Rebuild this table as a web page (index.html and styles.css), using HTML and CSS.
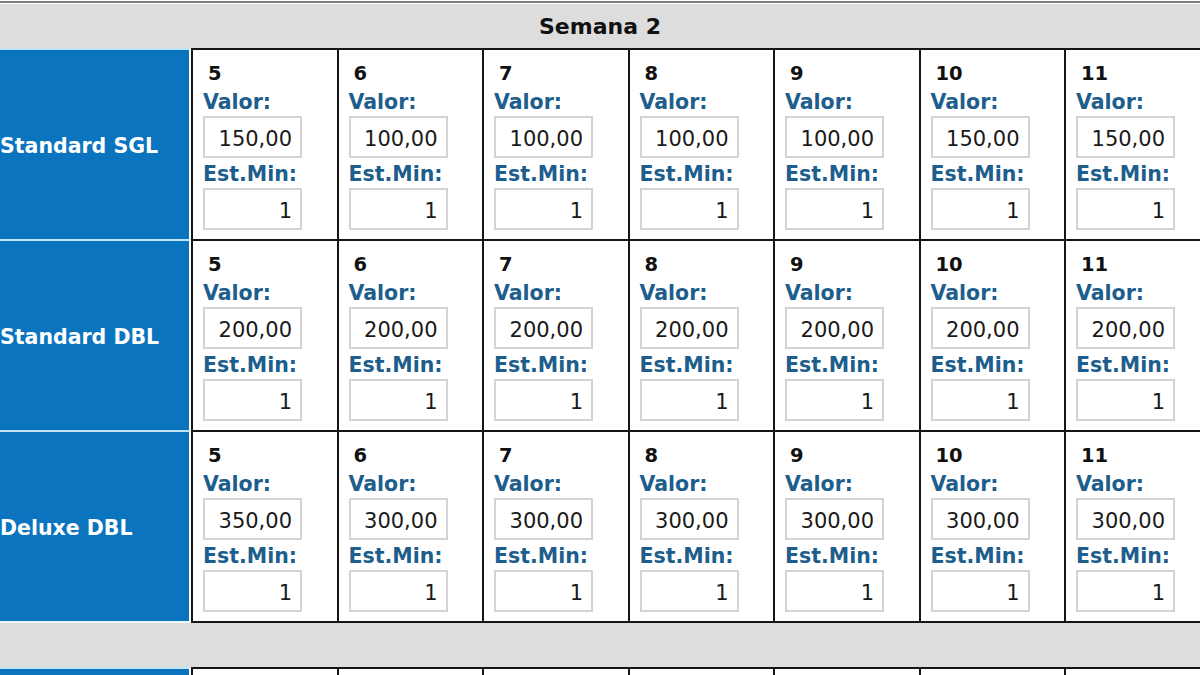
FILE: index.html
```html
<!DOCTYPE html>
<html lang="pt">
<head>
<meta charset="utf-8">
<title>Tarifas - Semana 2</title>
<link rel="stylesheet" href="styles.css">
</head>
<body>
<div class="page">
  <div class="week-header">Semana 2</div>

  <div class="room-row">
    <div class="room-name">Standard SGL</div>
    <div class="day"><div class="day-num">5</div><div class="field-label">Valor:</div><input class="field-input" type="text" value="150,00" readonly><div class="field-label field-label--second">Est.Min:</div><input class="field-input" type="text" value="1" readonly></div>
    <div class="day"><div class="day-num">6</div><div class="field-label">Valor:</div><input class="field-input" type="text" value="100,00" readonly><div class="field-label field-label--second">Est.Min:</div><input class="field-input" type="text" value="1" readonly></div>
    <div class="day"><div class="day-num">7</div><div class="field-label">Valor:</div><input class="field-input" type="text" value="100,00" readonly><div class="field-label field-label--second">Est.Min:</div><input class="field-input" type="text" value="1" readonly></div>
    <div class="day"><div class="day-num">8</div><div class="field-label">Valor:</div><input class="field-input" type="text" value="100,00" readonly><div class="field-label field-label--second">Est.Min:</div><input class="field-input" type="text" value="1" readonly></div>
    <div class="day"><div class="day-num">9</div><div class="field-label">Valor:</div><input class="field-input" type="text" value="100,00" readonly><div class="field-label field-label--second">Est.Min:</div><input class="field-input" type="text" value="1" readonly></div>
    <div class="day"><div class="day-num">10</div><div class="field-label">Valor:</div><input class="field-input" type="text" value="150,00" readonly><div class="field-label field-label--second">Est.Min:</div><input class="field-input" type="text" value="1" readonly></div>
    <div class="day"><div class="day-num">11</div><div class="field-label">Valor:</div><input class="field-input" type="text" value="150,00" readonly><div class="field-label field-label--second">Est.Min:</div><input class="field-input" type="text" value="1" readonly></div>
  </div>

  <div class="room-row">
    <div class="room-name">Standard DBL</div>
    <div class="day"><div class="day-num">5</div><div class="field-label">Valor:</div><input class="field-input" type="text" value="200,00" readonly><div class="field-label field-label--second">Est.Min:</div><input class="field-input" type="text" value="1" readonly></div>
    <div class="day"><div class="day-num">6</div><div class="field-label">Valor:</div><input class="field-input" type="text" value="200,00" readonly><div class="field-label field-label--second">Est.Min:</div><input class="field-input" type="text" value="1" readonly></div>
    <div class="day"><div class="day-num">7</div><div class="field-label">Valor:</div><input class="field-input" type="text" value="200,00" readonly><div class="field-label field-label--second">Est.Min:</div><input class="field-input" type="text" value="1" readonly></div>
    <div class="day"><div class="day-num">8</div><div class="field-label">Valor:</div><input class="field-input" type="text" value="200,00" readonly><div class="field-label field-label--second">Est.Min:</div><input class="field-input" type="text" value="1" readonly></div>
    <div class="day"><div class="day-num">9</div><div class="field-label">Valor:</div><input class="field-input" type="text" value="200,00" readonly><div class="field-label field-label--second">Est.Min:</div><input class="field-input" type="text" value="1" readonly></div>
    <div class="day"><div class="day-num">10</div><div class="field-label">Valor:</div><input class="field-input" type="text" value="200,00" readonly><div class="field-label field-label--second">Est.Min:</div><input class="field-input" type="text" value="1" readonly></div>
    <div class="day"><div class="day-num">11</div><div class="field-label">Valor:</div><input class="field-input" type="text" value="200,00" readonly><div class="field-label field-label--second">Est.Min:</div><input class="field-input" type="text" value="1" readonly></div>
  </div>

  <div class="room-row room-row--last">
    <div class="room-name">Deluxe DBL</div>
    <div class="day"><div class="day-num">5</div><div class="field-label">Valor:</div><input class="field-input" type="text" value="350,00" readonly><div class="field-label field-label--second">Est.Min:</div><input class="field-input" type="text" value="1" readonly></div>
    <div class="day"><div class="day-num">6</div><div class="field-label">Valor:</div><input class="field-input" type="text" value="300,00" readonly><div class="field-label field-label--second">Est.Min:</div><input class="field-input" type="text" value="1" readonly></div>
    <div class="day"><div class="day-num">7</div><div class="field-label">Valor:</div><input class="field-input" type="text" value="300,00" readonly><div class="field-label field-label--second">Est.Min:</div><input class="field-input" type="text" value="1" readonly></div>
    <div class="day"><div class="day-num">8</div><div class="field-label">Valor:</div><input class="field-input" type="text" value="300,00" readonly><div class="field-label field-label--second">Est.Min:</div><input class="field-input" type="text" value="1" readonly></div>
    <div class="day"><div class="day-num">9</div><div class="field-label">Valor:</div><input class="field-input" type="text" value="300,00" readonly><div class="field-label field-label--second">Est.Min:</div><input class="field-input" type="text" value="1" readonly></div>
    <div class="day"><div class="day-num">10</div><div class="field-label">Valor:</div><input class="field-input" type="text" value="300,00" readonly><div class="field-label field-label--second">Est.Min:</div><input class="field-input" type="text" value="1" readonly></div>
    <div class="day"><div class="day-num">11</div><div class="field-label">Valor:</div><input class="field-input" type="text" value="300,00" readonly><div class="field-label field-label--second">Est.Min:</div><input class="field-input" type="text" value="1" readonly></div>
  </div>

  <div class="week-spacer"></div>

  <div class="room-row room-row--stub">
    <div class="room-name"></div>
    <div class="day"></div>
    <div class="day"></div>
    <div class="day"></div>
    <div class="day"></div>
    <div class="day"></div>
    <div class="day"></div>
    <div class="day"></div>
  </div>
</div>
</body>
</html>
```

FILE: styles.css
```css
html, body {
  margin: 0;
  padding: 0;
  background: #ffffff;
}

body {
  font-family: "DejaVu Sans", Verdana, sans-serif;
  overflow: hidden;
}

.page {
  width: 1200px;
  height: 675px;
  overflow: hidden;
}

.week-header {
  margin-top: 1px;
  border-top: 2px solid #7e7e7e;
  box-shadow: inset 0 1px 0 #ffffff;
  padding-top: 1px;
  height: 44px;
  line-height: 46px;
  background: #dddddd;
  text-align: center;
  font-weight: bold;
  font-size: 22px;
  color: #111111;
}

.week-spacer {
  height: 44px;
  background: #dddddd;
}

.room-row {
  display: grid;
  grid-template-columns: 191px repeat(7, 145.5px);
  height: 191px;
}

.room-row--last {
  height: 193px;
}

.room-row--stub {
  height: 20px;
}

.room-name {
  display: flex;
  align-items: center;
  background: #0b74bf;
  border-top: 2px solid #c4e3f6;
  border-right: 2px solid #ffffff;
  color: #ffffff;
  font-weight: bold;
  font-size: 20.5px;
  padding-top: 2px;
  white-space: nowrap;
  overflow: hidden;
}

.room-row--last .room-name {
  border-bottom: 2px solid #f2f8fc;
}

.day {
  border-top: 2px solid #161616;
  border-left: 2px solid #161616;
  padding: 10px 0 0 10px;
  background: #ffffff;
  overflow: hidden;
}

.room-row--last .day {
  border-bottom: 2px solid #161616;
}

.day-num {
  font-weight: bold;
  font-size: 19.5px;
  line-height: 28px;
  padding-left: 5px;
  color: #111111;
}

.field-label {
  font-weight: bold;
  font-size: 20.5px;
  line-height: 28px;
  color: #1d5e8d;
  white-space: nowrap;
}

.field-label--second {
  margin-top: 2px;
}

.field-input {
  display: block;
  box-sizing: border-box;
  width: 99px;
  height: 42px;
  margin: 0;
  border: 2px solid #d3d3d3;
  padding: 3px 8px 0 0;
  background: #ffffff;
  text-align: right;
  font-family: "DejaVu Sans", Verdana, sans-serif;
  font-size: 21px;
  color: #1a1a1a;
  outline: none;
}
```
